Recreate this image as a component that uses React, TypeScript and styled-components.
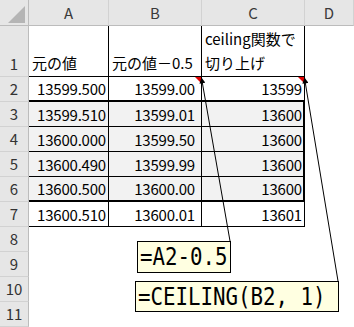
import React from 'react'
import styled, { createGlobalStyle } from 'styled-components'

const GlobalStyle = createGlobalStyle`
    html, body {
        margin: 0;
        padding: 0;
        background: #fff;
    }
    body {
        font-family: "Noto Sans CJK JP", "Noto Sans", sans-serif;
    }
`

type Edge = 'none' | 'thin' | 'thick' | 'grid'

const edge = (e: Edge) =>
    e === 'thick' ? '2px solid #000' : e === 'thin' ? '1px solid #000' : e === 'grid' ? '1px solid transparent' : '0'

const SSheet = styled.div`
    position: relative;
    width: 354px;
    height: 327px;
    overflow: hidden;
    display: grid;
    grid-template-columns: 29px 80px 93px 103px 1fr;
    grid-template-rows: 26px 51px repeat(10, 25px);
    font-size: 15px;
    color: #000;
`

const SCorner = styled.div`
    position: relative;
    background: #e6e6e6;
    border-right: 1px solid #bcbcbc;
    border-bottom: 1px solid #bcbcbc;
    box-sizing: border-box;
    &::after {
        content: '';
        position: absolute;
        right: 3px;
        bottom: 2px;
        width: 0;
        height: 0;
        border-left: 17px solid transparent;
        border-bottom: 17px solid #b5b5b5;
    }
`

const SColHead = styled.div`
    background: #e6e6e6;
    border-right: 1px solid #d2d2d2;
    border-bottom: 1px solid #bcbcbc;
    box-sizing: border-box;
    display: flex;
    align-items: center;
    justify-content: center;
    color: #3a3a3a;
    font-size: 15px;
`

const SRowHead = styled.div`
    background: #e6e6e6;
    border-right: 1px solid #bcbcbc;
    border-bottom: 1px solid #d2d2d2;
    box-sizing: border-box;
    display: flex;
    align-items: flex-end;
    justify-content: center;
    padding-bottom: 2px;
    color: #333;
    font-size: 15px;
    line-height: 20px;
`

const SCell = styled.div<{ $right: Edge; $bottom: Edge; $fill?: string; $align?: 'left' | 'right'; $pad?: number }>`
    position: relative;
    box-sizing: border-box;
    border-right: ${p => edge(p.$right)};
    border-bottom: ${p => edge(p.$bottom)};
    background: ${p => p.$fill || '#fff'};
    display: flex;
    align-items: center;
    justify-content: ${p => (p.$align === 'left' ? 'flex-start' : 'flex-end')};
    padding: 0 ${p => p.$pad ?? 2}px 0 ${p => (p.$align === 'left' ? 3 : 0)}px;
    white-space: nowrap;
    font-size: 15px;
    letter-spacing: -0.2px;
`

const STitleCell = styled(SCell)`
    align-items: flex-end;
    line-height: 24px;
    padding-bottom: 1px;
    letter-spacing: 0;
`

const SMark = styled.span`
    position: absolute;
    top: 0;
    right: 0;
    width: 0;
    height: 0;
    border-top: 6px solid #e00000;
    border-left: 6px solid transparent;
`

const SNote = styled.div<{ $left: number; $top: number; $w: number; $h: number }>`
    position: absolute;
    left: ${p => p.$left}px;
    top: ${p => p.$top}px;
    width: ${p => p.$w}px;
    height: ${p => p.$h}px;
    box-sizing: border-box;
    border: 1px solid #000;
    background: #ffffe1;
    display: flex;
    align-items: center;
    padding-left: 2px;
    overflow: hidden;
`

const SNoteText = styled.span`
    display: inline-block;
    font-family: "DejaVu Sans Mono", "Liberation Mono", monospace;
    font-size: 24px;
    line-height: 28px;
    color: #000;
    white-space: pre;
    transform: scaleX(0.865);
    transform-origin: left center;
`

const SArrows = styled.svg`
    position: absolute;
    left: 0;
    top: 0;
    pointer-events: none;
`

type Row = { a: string; b: string; c: string; mark?: boolean }

const rows: Row[] = [
    { a: '13599.500', b: '13599.00', c: '13599', mark: true },
    { a: '13599.510', b: '13599.01', c: '13600' },
    { a: '13600.000', b: '13599.50', c: '13600' },
    { a: '13600.490', b: '13599.99', c: '13600' },
    { a: '13600.500', b: '13600.00', c: '13600' },
    { a: '13600.510', b: '13600.01', c: '13601' },
]

const App = () => {
    return (
        <>
            <GlobalStyle />
            <SSheet>
                <SCorner />
                {['A', 'B', 'C', 'D'].map(l => (
                    <SColHead key={l}>{l}</SColHead>
                ))}

                <SRowHead>1</SRowHead>
                <STitleCell $right="thin" $bottom="thin" $align="left">元の値</STitleCell>
                <STitleCell $right="thin" $bottom="thin" $align="left">元の値－0.5</STitleCell>
                <STitleCell $right="thin" $bottom="thin" $align="left">
                    <span>ceiling関数で<br />切り上げ</span>
                </STitleCell>
                <SCell $right="none" $bottom="none" />

                {rows.map((r, i) => {
                    const n = i + 2
                    const inBox = n >= 3 && n <= 6
                    const bottom: Edge = n === 2 || n === 6 ? 'thick' : 'thin'
                    const fill = inBox ? '#f2f2f2' : '#fff'
                    return (
                        <React.Fragment key={n}>
                            <SRowHead>{n}</SRowHead>
                            <SCell $right="thin" $bottom={bottom} $fill={fill} $pad={2}>{r.a}</SCell>
                            <SCell $right="thin" $bottom={bottom} $fill={fill} $pad={6}>
                                {r.b}
                                {r.mark && <SMark />}
                            </SCell>
                            <SCell $right={inBox ? 'thick' : 'thin'} $bottom={bottom} $fill={fill} $pad={inBox ? 1 : 2}>
                                {r.c}
                                {r.mark && <SMark />}
                            </SCell>
                            <SCell $right="none" $bottom="none" />
                        </React.Fragment>
                    )
                })}

                {[8, 9, 10, 11].map(n => (
                    <React.Fragment key={n}>
                        <SRowHead>{n}</SRowHead>
                        <SCell $right="none" $bottom="none" />
                        <SCell $right="none" $bottom="none" />
                        <SCell $right="none" $bottom="none" />
                        <SCell $right="none" $bottom="none" />
                    </React.Fragment>
                ))}

                <SArrows width={354} height={327}>
                    <defs>
                        <marker id="head" viewBox="0 0 10 10" refX="9" refY="5" markerWidth="7" markerHeight="6" orient="auto-start-reverse" markerUnits="userSpaceOnUse">
                            <path d="M0 0 L10 5 L0 10 z" fill="#000" />
                        </marker>
                    </defs>
                    <line x1={230} y1={241} x2={201.5} y2={78} stroke="#000" strokeWidth={1} markerEnd="url(#head)" />
                    <line x1={338} y1={281} x2={304.5} y2={78} stroke="#000" strokeWidth={1} markerEnd="url(#head)" />
                </SArrows>

                <SNote $left={137} $top={241} $w={94} $h={32}>
                    <SNoteText>=A2-0.5</SNoteText>
                </SNote>
                <SNote $left={135} $top={281} $w={204} $h={31}>
                    <SNoteText>=CEILING(B2, 1)</SNoteText>
                </SNote>
            </SSheet>
        </>
    )
}

export default App
